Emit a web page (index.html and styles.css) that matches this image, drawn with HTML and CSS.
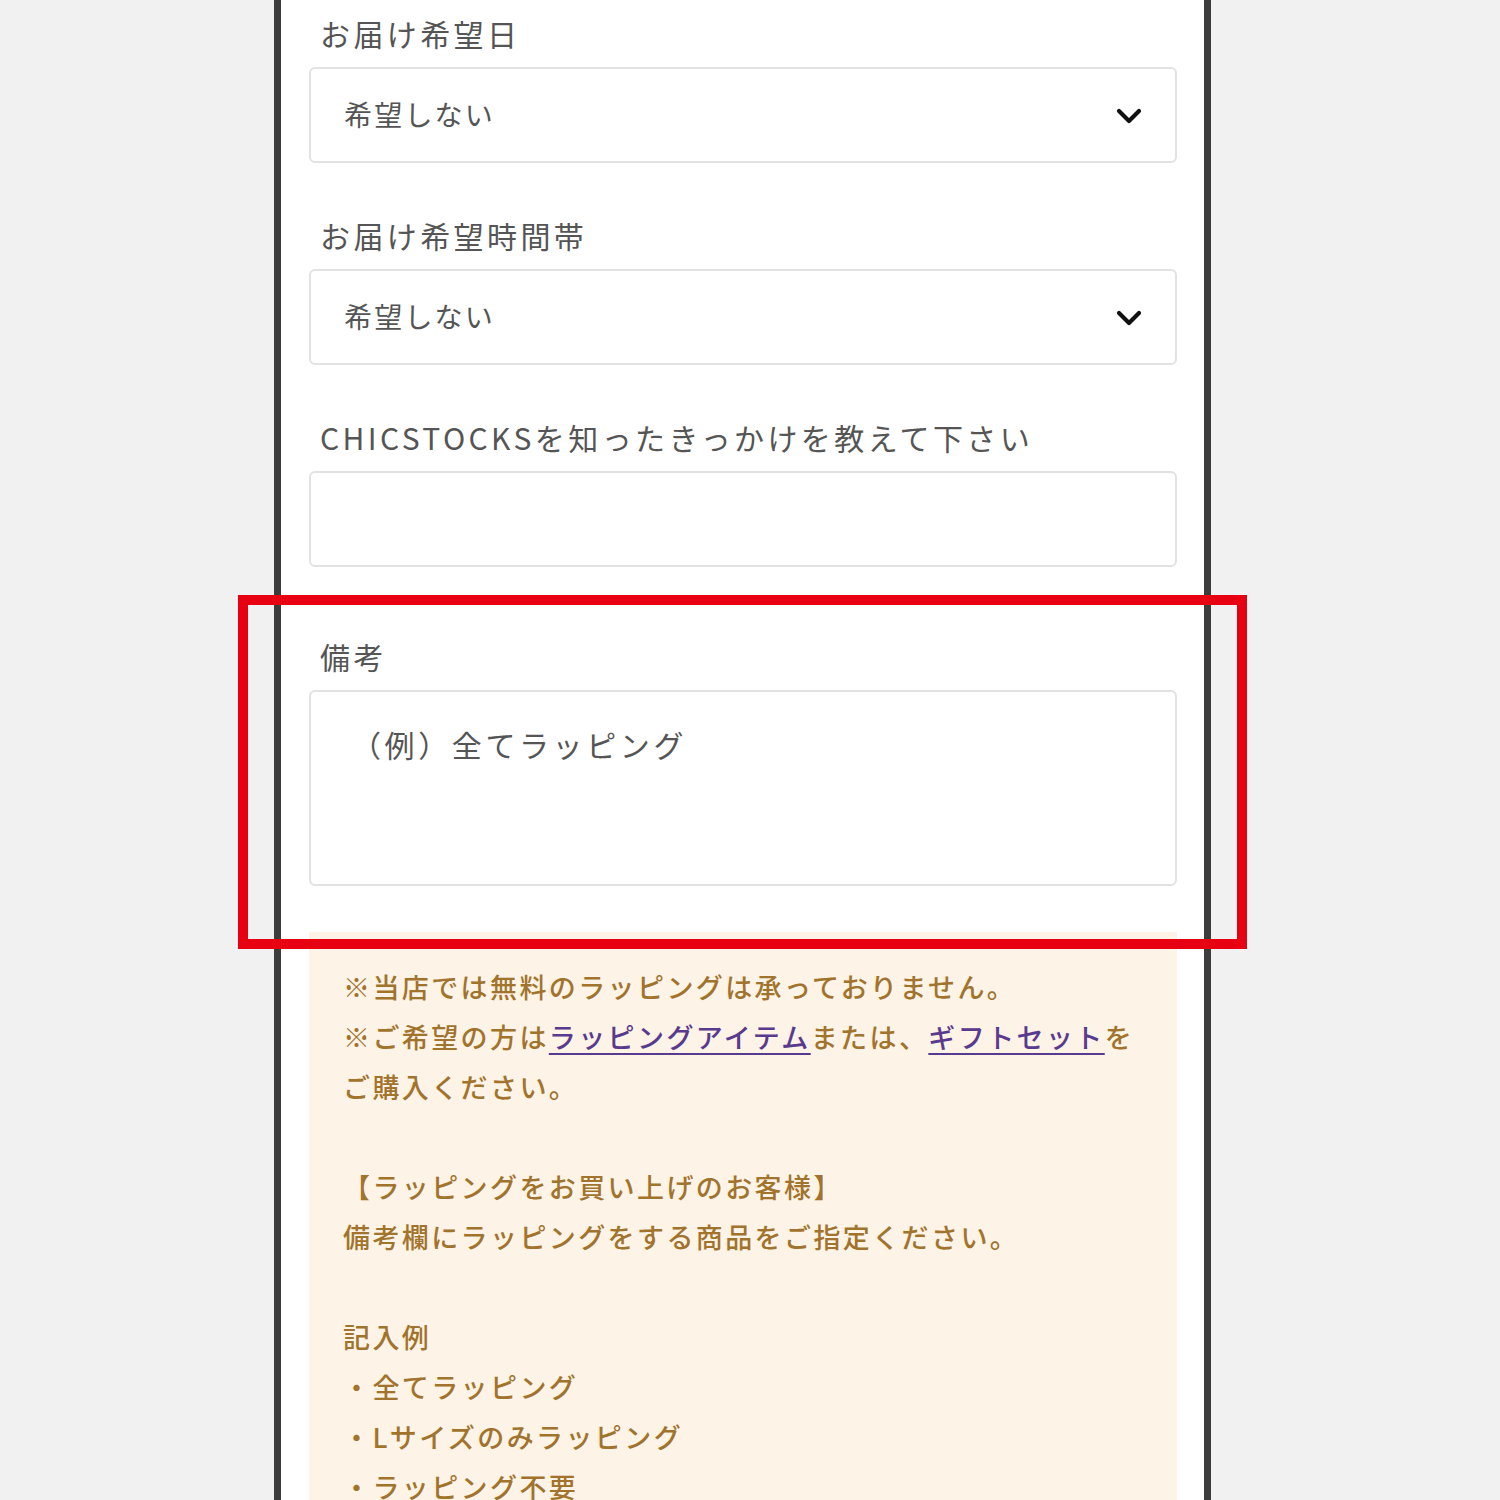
FILE: index.html
```html
<!DOCTYPE html>
<html lang="ja">
<head>
<meta charset="utf-8">
<title>備考</title>
<link rel="stylesheet" href="styles.css">
</head>
<body>
<div class="stage">
  <div class="phone">
    <div class="field">
      <div class="label">お届け希望日</div>
      <div class="select">
        <span>希望しない</span>
        <svg class="chev" width="26" height="18" viewBox="0 0 26 18"><path d="M3 4 L13 14 L23 4" fill="none" stroke="#111" stroke-width="4.2" stroke-linecap="round" stroke-linejoin="round"/></svg>
      </div>
    </div>
    <div class="field">
      <div class="label">お届け希望時間帯</div>
      <div class="select">
        <span>希望しない</span>
        <svg class="chev" width="26" height="18" viewBox="0 0 26 18"><path d="M3 4 L13 14 L23 4" fill="none" stroke="#111" stroke-width="4.2" stroke-linecap="round" stroke-linejoin="round"/></svg>
      </div>
    </div>
    <div class="field field-last">
      <div class="label">CHICSTOCKSを知ったきっかけを教えて下さい</div>
      <div class="input"></div>
    </div>
    <div class="field field-note">
      <div class="label">備考</div>
      <div class="textarea"><span class="placeholder">（例）全てラッピング</span></div>
    </div>
    <div class="notice">
      <p>※当店では無料のラッピングは承っておりません。</p>
      <p>※ご希望の方は<a href="#">ラッピングアイテム</a>または、<a href="#">ギフトセット</a>を<br>ご購入ください。</p>
      <p class="gap">【ラッピングをお買い上げのお客様】<br>備考欄にラッピングをする商品をご指定ください。</p>
      <p class="gap">記入例<br>・全てラッピング<br>・Lサイズのみラッピング<br>・ラッピング不要</p>
    </div>
  </div>
  <div class="highlight"></div>
</div>
</body>
</html>
```

FILE: styles.css
```css
html, body {
  margin: 0;
  padding: 0;
  background: #f1f1f1;
}
body {
  height: 1500px;
  overflow: hidden;
  font-family: "Noto Sans CJK JP", "Noto Sans", sans-serif;
}
.stage {
  position: relative;
  width: 1500px;
  height: 1500px;
}
.phone {
  margin-left: 274px;
  width: 868px;
  min-height: 1500px;
  background: #ffffff;
  border-left: 7px solid #3d3d3d;
  border-right: 7px solid #3d3d3d;
  padding: 12px 27px 0 28px;
}
.field {
  margin-bottom: 51px;
}
.field-last {
  margin-bottom: 0;
}
.field-note {
  margin-top: 68px;
  margin-bottom: 0;
}
.label {
  font-size: 30px;
  line-height: 42px;
  letter-spacing: 3.4px;
  color: #555555;
  padding-left: 11px;
  margin-bottom: 13px;
}
.select, .input, .textarea {
  box-sizing: border-box;
  border: 2px solid #e2e2e2;
  border-radius: 6px;
  background: #ffffff;
}
.select {
  height: 96px;
  display: flex;
  align-items: center;
  justify-content: space-between;
  padding: 0 33px 0 33px;
  font-size: 28px;
  letter-spacing: 2.2px;
  color: #555555;
}
.select span {
  line-height: 40px;
  margin-top: -2px;
}
.chev {
  display: block;
  margin-top: 2px;
}
.input {
  height: 96px;
}
.textarea {
  height: 196px;
  padding: 31px 0 0 40px;
}
.placeholder {
  font-size: 30px;
  line-height: 42px;
  letter-spacing: 3.6px;
  color: #555555;
  display: block;
}
.notice {
  margin-top: 46px;
  background: #fdf3e6;
  padding: 30px 20px 40px 34px;
  color: #a2732c;
  font-size: 27px;
  font-weight: 500;
  line-height: 50px;
  letter-spacing: 2.4px;
}
.notice p {
  margin: 0;
}
.notice p.gap {
  margin-top: 50px;
}
.notice a {
  color: #5a3a8e;
  text-decoration: underline;
  text-decoration-thickness: 2px;
  text-underline-offset: 5px;
}
.highlight {
  position: absolute;
  left: 238px;
  top: 595px;
  width: 1009px;
  height: 354px;
  box-sizing: border-box;
  border: 10px solid #e60012;
}
```
